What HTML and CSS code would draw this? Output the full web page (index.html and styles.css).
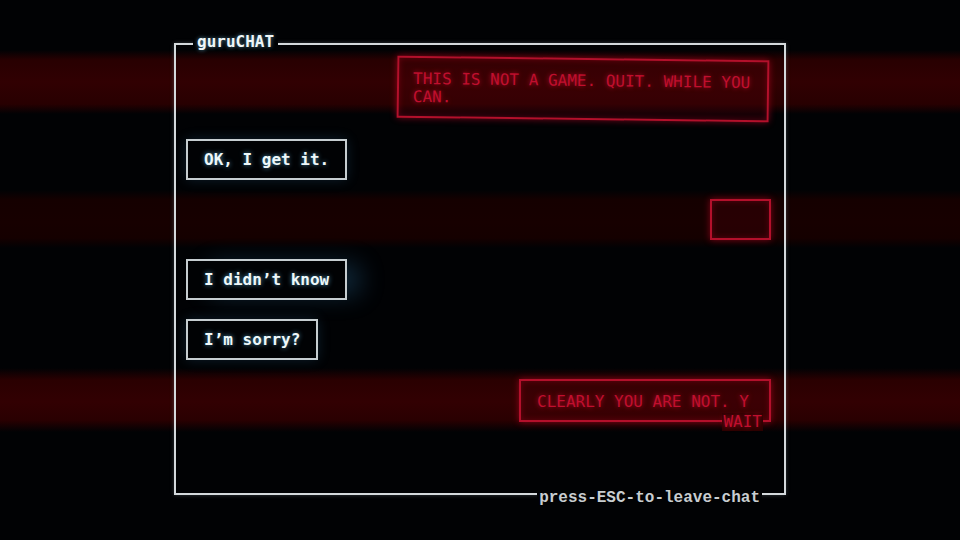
FILE: index.html
```html
<!DOCTYPE html>
<html lang="en">
<head>
    <meta charset="UTF-8">
    <meta name="viewport" content="width=device-width, initial-scale=1.0">
    <title>guruCHAT</title>
    <link rel="stylesheet" href="styles.css">
</head>
<body>
    <section class="chat">
        <h1 class="chat-title">guruCHAT</h1>

        <div class="msg msg-in msg-skew">THIS IS NOT A GAME. QUIT. WHILE YOU CAN.</div>
        <div class="msg msg-out">OK, I get it.</div>
        <div class="msg msg-in msg-empty"></div>
        <div class="msg msg-out msg-lit">I didn’t know</div>
        <div class="msg msg-out">I’m sorry?</div>
        <div class="msg msg-in msg-typing">CLEARLY YOU ARE NOT. Y<span class="msg-spill">WAIT</span></div>

        <p class="chat-hint">press-ESC-to-leave-chat</p>
    </section>
</body>
</html>
```

FILE: styles.css
```css
body {
    margin: 0;
    width: 960px;
    height: 540px;
    overflow: hidden;
    font-family: "DejaVu Sans Mono", "Liberation Mono", monospace;
    font-size: 16px;
    /* scanline bands running across the screen */
    background: linear-gradient(to bottom,
        #010204 0, #010204 50px,
        #280001 60px, #310002 82px, #280001 104px,
        #010204 114px, #010204 190px,
        #150000 200px, #170000 222px, #150000 238px,
        #010204 248px, #010204 368px,
        #2a0001 380px, #320002 402px, #2a0001 420px,
        #010204 432px, #010204 100%);
}

.chat {
    position: relative;
    box-sizing: border-box;
    width: 612px;
    height: 452px;
    margin: 43px 0 0 174px;
    padding: 13px 13px 0 10px;
    border: 2px solid #d4d9dc;
    box-shadow: 0 0 4px rgba(200, 220, 230, 0.25);
    display: flex;
    flex-direction: column;
    align-items: flex-start;
    gap: 19px;
}

.chat-title {
    position: absolute;
    top: -12px;
    left: 17px;
    margin: 0;
    padding: 0 4px;
    background: #010204;
    color: #eef6f8;
    font-size: 16px;
    font-weight: bold;
    line-height: 18px;
    text-shadow: 0 0 4px rgba(140, 220, 255, 0.6);
}

.chat-hint {
    position: absolute;
    right: 22px;
    bottom: -14px;
    margin: 0;
    padding: 0 2px;
    background: #010204;
    color: #c8cdd0;
    font-family: "Liberation Mono", "DejaVu Sans Mono", monospace;
    font-weight: bold;
    font-size: 16px;
    line-height: 18px;
}

.msg {
    position: relative;
    box-sizing: border-box;
}

.msg-out {
    padding: 10px 16px;
    line-height: 17px;
    border: 2px solid #c6cdd0;
    color: #eef8fa;
    font-weight: bold;
    white-space: nowrap;
    text-shadow: 0 0 5px rgba(110, 210, 255, 0.7);
    box-shadow: 0 0 12px rgba(70, 160, 220, 0.18);
}

.msg-lit {
    box-shadow: 18px 0 26px -6px rgba(60, 150, 210, 0.3);
}

.msg-in {
    align-self: flex-end;
    padding: 12px 14px 10px;
    line-height: 18px;
    border: 2px solid #b3102b;
    background: rgba(90, 0, 12, 0.25);
    color: #c00f2e;
    text-shadow: 0 0 5px rgba(255, 20, 60, 0.6);
    box-shadow: 0 0 7px rgba(255, 10, 50, 0.45), inset 0 0 6px rgba(255, 10, 50, 0.25);
}

.msg-skew {
    width: 372px;
    margin-right: 2px;
    transform: rotate(0.7deg);
}

.msg-empty {
    width: 61px;
    height: 41px;
}

.msg-typing {
    width: 252px;
    height: 43px;
    padding: 12px 14px 9px 16px;
    white-space: nowrap;
}

.msg-spill {
    position: absolute;
    right: 6px;
    bottom: -11px;
    padding: 0 1px;
    line-height: 18px;
    background: #2c0001;
}
```
